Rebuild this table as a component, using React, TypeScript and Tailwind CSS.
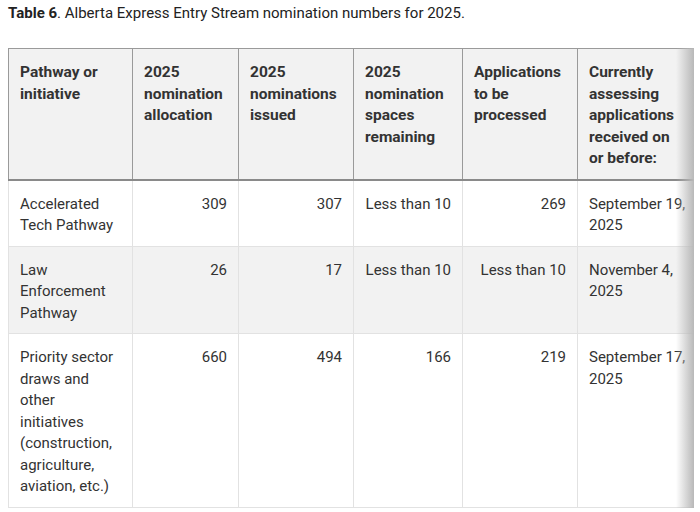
import React from "react";

const headers = [
  "Pathway or initiative",
  "2025 nomination allocation",
  "2025 nominations issued",
  "2025 nomination spaces remaining",
  "Applications to be processed",
  "Currently assessing applications received on or before:",
];

const rows: { cells: string[]; shaded: boolean }[] = [
  { cells: ["Accelerated Tech Pathway", "309", "307", "Less than 10", "269", "September 19, 2025"], shaded: false },
  { cells: ["Law Enforcement Pathway", "26", "17", "Less than 10", "Less than 10", "November 4, 2025"], shaded: true },
  {
    cells: [
      "Priority sector draws and other initiatives (construction, agriculture, aviation, etc.)",
      "660",
      "494",
      "166",
      "219",
      "September 17, 2025",
    ],
    shaded: false,
  },
];

export default function App() {
  return (
    <div
      className="w-[700px] h-[512px] bg-white overflow-hidden text-[#333]"
      style={{ fontFamily: "Roboto, 'Liberation Sans', sans-serif" }}
    >
      <p className="pl-[8px] pt-[2px] text-[15px] leading-[22px] text-[#222]">
        <span className="font-bold">Table 6</span>. Alberta Express Entry Stream nomination numbers for 2025.
      </p>
      <div className="relative ml-[8px] mt-[24px] w-[686px] overflow-hidden">
        <table className="table-fixed border-collapse w-[686px] text-[15px] leading-[21.5px]">
          <colgroup>
            <col className="w-[124px]" />
            <col className="w-[106px]" />
            <col className="w-[115px]" />
            <col className="w-[109px]" />
            <col className="w-[115px]" />
            <col className="w-[117px]" />
          </colgroup>
          <thead>
            <tr className="bg-[#f2f2f2]">
              {headers.map((h, i) => (
                <th
                  key={i}
                  className="border border-[#9a9a9a] border-b-2 border-b-[#8a8a8a] px-[11px] pt-[13px] pb-[9px] text-left align-top font-bold text-[15.5px] text-[#333]"
                >
                  {h}
                </th>
              ))}
            </tr>
          </thead>
          <tbody>
            {rows.map((r, ri) => (
              <tr key={ri} className={r.shaded ? "bg-[#f2f2f2]" : "bg-white"}>
                {r.cells.map((c, ci) => (
                  <td
                    key={ci}
                    className={
                      "border border-[#e2e2e2] pl-[11px] pt-[13px] pb-[9px] align-top " +
                      (ci === 5 ? "pr-[2px] text-left" : ci === 0 ? "pr-[11px] text-left" : "pr-[11px] text-right")
                    }
                  >
                    {c}
                  </td>
                ))}
              </tr>
            ))}
          </tbody>
        </table>
        <div className="pointer-events-none absolute right-0 top-0 bottom-0 w-[18px] bg-gradient-to-r from-transparent to-[#b8b8b8]" />
      </div>
    </div>
  );
}
